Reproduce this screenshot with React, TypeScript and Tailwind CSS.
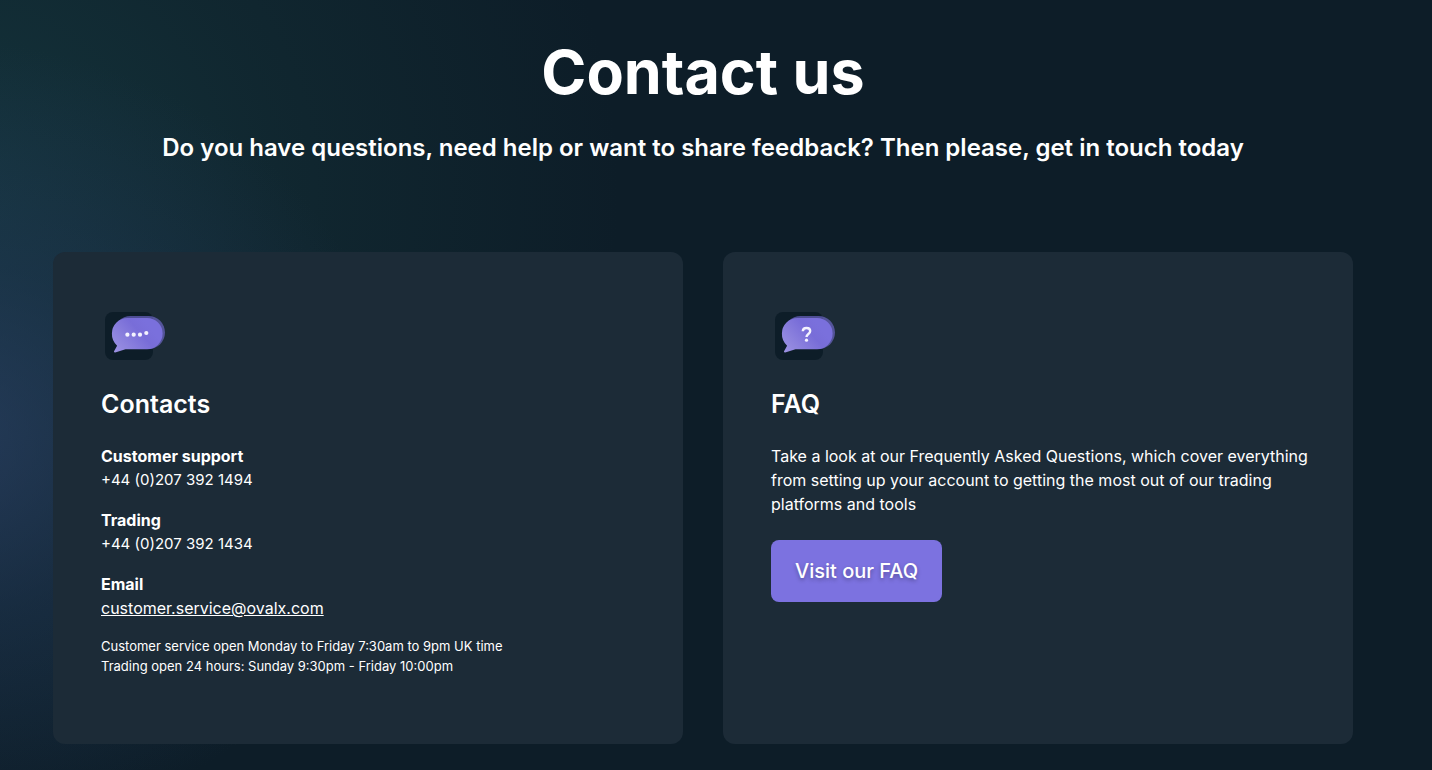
import React from 'react';

interface CardProps {
  icon: React.ReactNode;
  title: string;
  children: React.ReactNode;
}

interface BubbleIconProps {
  id: string;
  children: React.ReactNode;
}

const phoneLines = [
  { label: 'Customer support', phone: '+44 (0)207 392 1494', href: 'tel:+442073921494' },
  { label: 'Trading', phone: '+44 (0)207 392 1434', href: 'tel:+442073921434' }
];

function BubbleIcon({ id, children }: BubbleIconProps) {
  return (
    <svg className="h-[72px] w-[72px]" viewBox="0 0 72 72" fill="none" aria-hidden="true">
      <defs>
        <linearGradient id={id} x1="12" y1="50" x2="44" y2="22" gradientUnits="userSpaceOnUse">
          <stop stopColor="#9C92E2" />
          <stop offset="0.75" stopColor="#786DD8" />
          <stop offset="1" stopColor="#7A70DC" />
        </linearGradient>
      </defs>
      <rect x="4" y="12" width="48" height="48" rx="8" fill="#0D1D28" />
      <rect x="13" y="16" width="51" height="33" rx="16.5" fill="#7A70DC" fillOpacity="0.6" />
      <path
        d="M26.5 18H46a15.6 15.6 0 0 1 0 31.2H24.500l-10.300 3.200c-1 .2-1.500-.6-1-1.400l2.900-5.300A15.600 15.600 0 0 1 10.900 33.600 15.600 15.600 0 0 1 26.500 18Z"
        fill={`url(#${id})`}
      />
      {children}
    </svg>
  );
}

function ChatIcon() {
  return (
    <BubbleIcon id="chat-bubble">
      <g fill="#F4F3FE">
        <circle cx="26.400" cy="34.700" r="2.100" />
        <circle cx="32.700" cy="34.700" r="2.100" />
        <circle cx="39" cy="34.700" r="2.100" />
        <circle cx="45.300" cy="33" r="2.100" />
      </g>
    </BubbleIcon>
  );
}

function QuestionIcon() {
  return (
    <BubbleIcon id="question-bubble">
      <path
        d="M31.800 31.300c.1-2.300 1.600-3.300 3.700-3.300s3.700 1.100 3.700 3.100c0 2.900-3.700 2.900-3.700 5.900"
        stroke="#F4F3FE"
        strokeWidth="2.400"
      />
      <circle cx="35.500" cy="40.200" r="1.600" fill="#F4F3FE" />
    </BubbleIcon>
  );
}

function Card({ icon, title, children }: CardProps) {
  return (
    <section className="rounded-xl bg-[#1c2b37] pt-12 pr-10 pb-[68px] pl-12">
      {icon}
      <h2 className="mt-4 mb-6 text-[25px] leading-8 font-semibold">{title}</h2>
      {children}
    </section>
  );
}

export default function App() {
  return (
    <main className="min-h-screen bg-[#0d1d28] bg-[radial-gradient(ellipse_460px_400px_at_-60px_440px,rgba(50,70,115,0.6),rgba(40,60,100,0.35)_45%,rgba(40,60,100,0)),radial-gradient(ellipse_680px_620px_at_-60px_190px,rgba(30,84,88,0.42),rgba(24,62,66,0.3)_50%,rgba(24,62,66,0))] pt-8 pr-[50px] pb-[26px] pl-6 font-[Inter,'Noto_Sans',sans-serif] text-white">
      <div className="mx-auto max-w-[1300px]">
        <header className="mb-[84px] text-center">
          <h1 className="text-[61px] leading-[80px] font-bold">Contact us</h1>
          <p className="mt-4 text-2xl leading-10 font-semibold">
            Do you have questions, need help or want to share feedback? Then please, get in touch today
          </p>
        </header>

        <div className="grid gap-10 md:grid-cols-2">
          <Card icon={<ChatIcon />} title="Contacts">
            <div className="space-y-4">
              {phoneLines.map((line) => (
                <p key={line.label}>
                  <strong className="block font-bold">{line.label}</strong>
                  <a href={line.href} className="block text-[15px] leading-6">
                    {line.phone}
                  </a>
                </p>
              ))}
              <p>
                <strong className="block font-bold">Email</strong>
                <a href="mailto:customer.service@ovalx.com" className="underline">
                  customer.service@ovalx.com
                </a>
              </p>
              <p className="text-[13px] leading-5">
                Customer service open Monday to Friday 7:30am to 9pm UK time
                <br />
                Trading open 24 hours: Sunday 9:30pm - Friday 10:00pm
              </p>
            </div>
          </Card>

          <Card icon={<QuestionIcon />} title="FAQ">
            <p className="mb-6 text-base">
              Take a look at our Frequently Asked Questions, which cover everything from setting up your account to
              getting the most out of our trading platforms and tools
            </p>
            <a
              href="#faq"
              className="inline-block rounded-lg bg-[#7c72e0] px-6 py-4 text-xl leading-[30px] font-medium [text-shadow:0_2px_4px_rgba(0,0,0,0.3)]"
            >
              Visit our FAQ
            </a>
          </Card>
        </div>
      </div>
    </main>
  );
}
